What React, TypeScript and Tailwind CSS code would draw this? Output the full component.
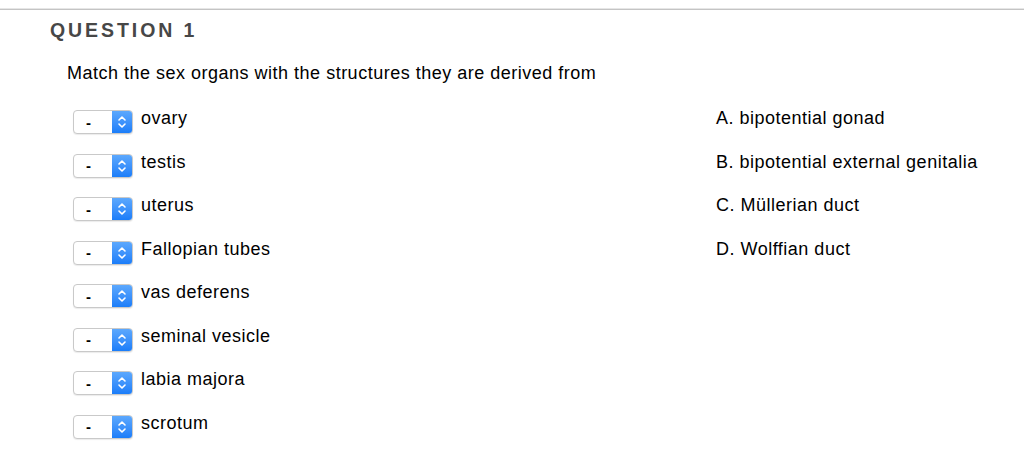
const organs = [
  "ovary",
  "testis",
  "uterus",
  "Fallopian tubes",
  "vas deferens",
  "seminal vesicle",
  "labia majora",
  "scrotum",
];

const answers = [
  "A. bipotential gonad",
  "B. bipotential external genitalia",
  "C. Müllerian duct",
  "D. Wolffian duct",
];

const SelectBox = () => {
  return (
    <div className="flex h-[24px] w-[60px] shrink-0 overflow-hidden rounded-[4px] border border-[#c9c9c9] bg-white shadow-[0_1px_1px_rgba(0,0,0,0.08)]">
      <div className="flex flex-1 items-center pl-[12px] text-[15px] font-bold leading-none text-black">-</div>
      <div className="flex w-[20px] items-center justify-center bg-gradient-to-b from-[#5ca8fd] to-[#1a7df9]">
        <svg width="10" height="16" viewBox="0 0 10 16" fill="none" stroke="white" strokeWidth="1.6" strokeLinecap="round" strokeLinejoin="round">
          <path d="M2 6 L5 3 L8 6" />
          <path d="M2 10 L5 13 L8 10" />
        </svg>
      </div>
    </div>
  );
};

export default function App() {
  return (
    <div className="h-[474px] w-[1024px] overflow-hidden bg-white font-['Liberation_Sans',Arial,sans-serif] text-black">
      <div className="mt-[8px] h-[2px] border-t border-b border-t-[#e6e6e6] border-b-[#c4c4c4]" />

      <h1 className="pl-[50px] pt-[8px] text-[19.5px] font-bold leading-[24px] tracking-[0.15em] text-[#474747]">
        QUESTION 1
      </h1>

      <p className="pl-[67px] pt-[21px] text-[18px] leading-[20px] tracking-[0.5px]">
        Match the sex organs with the structures they are derived from
      </p>

      <div className="pl-[73px] pt-[25px]">
        {organs.map((organ, i) => (
          <div key={organ} className="flex h-[43.5px] items-start">
            <div className="flex w-[643px] items-start gap-[8px]">
              <div className="pt-[2px]">
                <SelectBox />
              </div>
              <span className="text-[18px] leading-[20px] tracking-[0.5px]">{organ}</span>
            </div>
            {answers[i] && (
              <span className="text-[18px] leading-[20px] tracking-[0.5px]">{answers[i]}</span>
            )}
          </div>
        ))}
      </div>
    </div>
  );
}
